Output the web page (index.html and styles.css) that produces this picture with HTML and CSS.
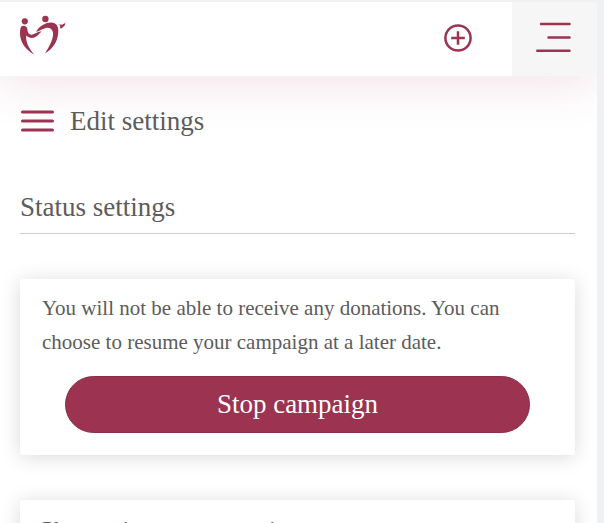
FILE: index.html
```html
<!DOCTYPE html>
<html lang="en">
<head>
<meta charset="utf-8">
<meta name="viewport" content="width=device-width, initial-scale=1">
<title>Edit settings</title>
<link rel="stylesheet" href="styles.css">
</head>
<body>
<div class="page">
  <header class="topbar">
    <a class="logo" href="#" aria-label="Home">
      <svg width="46" height="40" viewBox="0 0 46 40" aria-hidden="true">
        <circle cx="4.8" cy="6.3" r="3.1"/>
        <circle cx="25.4" cy="4" r="3.2"/>
        <path d="M1.2 11.6C3.2 9.6 7.2 10.8 7.4 14.2C7.5 18.2 9.3 20.2 12.5 19.5C15.7 18.8 18.2 16.2 21.8 16.6C19 18.6 16.5 23 12 23C9.6 23 7.7 22 6.3 20.6C5.4 27 9 33.5 14.2 39.8C5.5 34.5 -.2 27 0 17.8C0 15.2 .4 13 1.2 11.6Z"/>
        <path d="M16 16.8C19.4 11 25.5 7.6 31.2 7.6C36.2 7.6 38.7 11.3 38.3 17C37.8 26.5 33 33.5 25 38.6C29.3 31.5 34.4 22.5 32.8 16.8C31.7 12.8 27.8 12.2 24.4 13.4C21.5 14.4 19 16 16 16.8Z"/>
        <path d="M39 9C41 10.2 43.6 10 45.2 7.6C45.5 10.3 44 12 42.8 12C42.4 13.4 40.8 14 40 12.9C40.8 11.6 40 10.3 39 9Z"/>
      </svg>
    </a>
    <a class="add" href="#" aria-label="Create campaign">
      <svg width="28" height="28" viewBox="0 0 28 28" aria-hidden="true">
        <circle cx="14" cy="14" r="12.6"/>
        <path d="M7.2 14H20.8M14 7.2V20.8"/>
      </svg>
    </a>
    <button class="menu" type="button" aria-label="Menu">
      <svg width="36" height="32" viewBox="0 0 36 32" aria-hidden="true">
        <path d="M6 3H34.5M13.5 16.4H34.5M2.3 29.8H34.5"/>
      </svg>
    </button>
  </header>
  <main class="content">
    <div class="heading">
      <button class="toggle" type="button" aria-label="Settings sections">
        <svg width="33" height="22" viewBox="0 0 33 22" aria-hidden="true">
          <path d="M1.5 2H31.5M1.5 11H31.5M1.5 20H31.5"/>
        </svg>
      </button>
      <h1>Edit settings</h1>
    </div>
    <h2>Status settings</h2>
    <section class="card">
      <p>You will not be able to receive any donations. You can choose to resume your campaign at a later date.</p>
      <button class="stop" type="button">Stop campaign</button>
    </section>
    <section class="card">
      <p>Please write your message in</p>
    </section>
  </main>
</div>
</body>
</html>
```

FILE: styles.css
```css
:root {
  --brand: #9b3351;
  --ink: #5c5c5c;
}

* {
  box-sizing: border-box;
}

html {
  height: 100%;
  overflow: hidden;
  background: #f0f1f3;
}

body {
  height: 100%;
  margin: 0;
  padding: 2px 7px 0 0;
  overflow: hidden;
  color: var(--ink);
  font-family: "Liberation Serif", "Times New Roman", serif;
}

.page {
  height: 100%;
  overflow: hidden;
  background: #fff;
}

button {
  margin: 0;
  padding: 0;
  border: 0;
  background: none;
  font: inherit;
  cursor: pointer;
}

svg {
  display: block;
}

.topbar {
  display: flex;
  height: 74px;
  padding-left: 20px;
  background: #fff;
  box-shadow: 0 6px 50px rgba(155, 51, 81, 0.15);
}

.logo {
  margin: 13px auto 0 0;
  fill: var(--brand);
}

.add {
  align-self: center;
  margin: 0 40px 3px 0;
  fill: none;
  stroke: var(--brand);
  stroke-width: 2.5;
}

.menu {
  width: 85px;
  padding: 0 0 4px 23px;
  background: #f6f6f6;
  fill: none;
  stroke: var(--brand);
  stroke-width: 2.5;
  stroke-linecap: round;
}

.content {
  padding: 25px 22px 0 20px;
}

.heading {
  display: flex;
  align-items: center;
  gap: 16px;
}

.toggle {
  margin-left: 1px;
  stroke: var(--brand);
  stroke-width: 3;
  stroke-linecap: round;
}

h1,
h2 {
  margin: 0;
  font-size: 27px;
  font-weight: 400;
  line-height: 40px;
}

h2 {
  margin: 46px 0 45px;
  padding-bottom: 6px;
  border-bottom: 1px solid #ccc;
}

.card {
  margin-bottom: 45px;
  padding: 12px 22px 22px;
  border-radius: 3px;
  background: #fff;
  box-shadow: 0 2px 20px rgba(0, 0, 0, 0.15);
}

.card p {
  margin: 0;
  font-size: 21px;
  line-height: 34px;
}

.stop {
  display: block;
  width: calc(100% - 46px);
  margin: 17px auto 0 23px;
  border: 1px solid #8a2f4b;
  border-radius: 29px;
  background: var(--brand);
  color: #fff;
  font-size: 27px;
  line-height: 55px;
}
```
